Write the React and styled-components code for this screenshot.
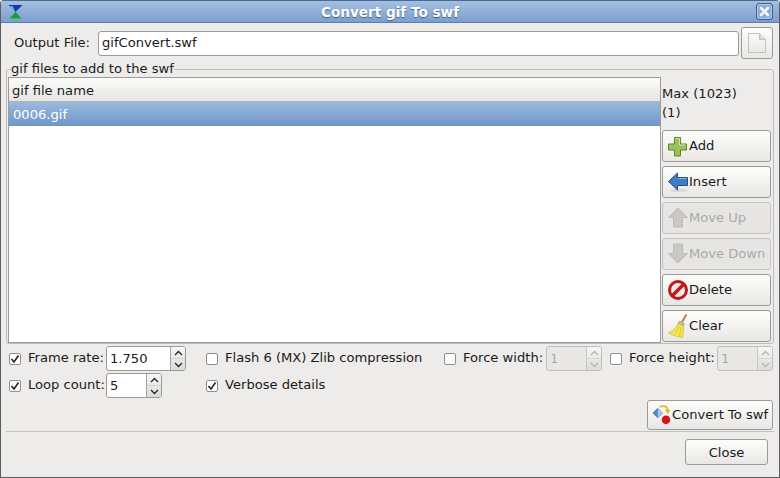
import React from "react";
import styled, { createGlobalStyle } from "styled-components";

const GlobalStyle = createGlobalStyle`
  html, body { margin: 0; padding: 0; background: #edecea; }
  body { font-family: "DejaVu Sans", sans-serif; font-size: 13.1px; color: #1a1a1a; }
`;

const Window = styled("div")`
  width: 780px;
  height: 478px;
  box-sizing: border-box;
  border: 1px solid #5e5e5e;
  border-top: 0;
  border-radius: 4px 4px 0 0;
  background: #edecea;
  display: flex;
  flex-direction: column;
  overflow: hidden;
`;

const TitleBar = styled("div")`
  height: 23px;
  flex: none;
  display: flex;
  align-items: center;
  justify-content: space-between;
  padding: 0 6px 0 8px;
  position: relative;
  background: linear-gradient(#a3bfe0, #7d9fce);
  border-top: 1px solid #4a6a96;
  border-bottom: 1px solid #5d7ea8;
  box-sizing: border-box;
`;

const TitleText = styled("div")`
  position: absolute;
  left: 0;
  right: 0;
  text-align: center;
  font-weight: bold;
  font-size: 13.6px;
  color: #fff;
  text-shadow: 0 1px 1px #3f5f8a;
`;

const CloseBox = styled("div")`
  width: 17px;
  height: 17px;
  box-sizing: border-box;
  border: 1px solid #3e5f8c;
  border-radius: 3px;
  display: flex;
  align-items: center;
  justify-content: center;
  background: #8dabd4;
  box-shadow: inset 0 0 0 1px #b4cbe8;
  z-index: 1;
`;

const Content = styled("div")`
  flex: 1;
  display: flex;
  flex-direction: column;
  padding: 4px 5px 0 5px;
  min-height: 0;
`;

const OutputRow = styled("div")`
  height: 32px;
  display: flex;
  align-items: center;
  padding-left: 8px;
`;

const OutputLabel = styled("span")`
  width: 84px;
  flex: none;
  margin-bottom: 2px;
`;

const TextField = styled("div")`
  width: 641px;
  height: 25px;
  box-sizing: border-box;
  border: 1px solid #9a9a96;
  border-radius: 3px;
  background: #fff;
  padding: 0 3px 2px;
  display: flex;
  align-items: center;
`;

const Button = styled("div")`
  box-sizing: border-box;
  width: ${props => props.$w || "109px"};
  height: ${props => props.$h || "32px"};
  border: 1px solid ${props => (props.disabled ? "#c4c3bf" : "#9a9a96")};
  border-radius: 3px;
  background: ${props =>
    props.disabled ? "#e6e5e3" : "linear-gradient(#fdfdfc, #e8e7e5)"};
  color: ${props => (props.disabled ? "#a9a9a7" : "#1a1a1a")};
  display: flex;
  align-items: center;
  justify-content: ${props => (props.$center ? "center" : "flex-start")};
  flex: none;
  white-space: nowrap;
`;

const ButtonText = styled("span")`
  margin-bottom: 2px;
`;

const FileButton = styled(Button)`
  margin-left: 2px;
  justify-content: center;
`;

const Group = styled("fieldset")`
  margin: 3px 0 0 0;
  padding: 0 1px;
  height: 282px;
  box-sizing: border-box;
  border: 1px solid #bdbcb8;
  border-radius: 3px;
  display: flex;
  min-width: 0;
`;

const Legend = styled("legend")`
  padding: 0;
  margin-left: 3px;
  line-height: 13px;
  height: 15px;
`;

const GroupInner = styled("div")`
  display: flex;
  width: 100%;
  height: 266px;
`;

const FileList = styled("div")`
  width: 653px;
  height: 266px;
  flex: none;
  box-sizing: border-box;
  border: 1px solid #9c9b97;
  background: #fff;
`;

const ListHeader = styled("div")`
  height: 24px;
  box-sizing: border-box;
  padding: 1px 0 0 3px;
  display: flex;
  align-items: center;
  background: linear-gradient(#fbfbfa, #e6e5e3);
  border-bottom: 1px solid #b5b4b0;
`;

const ListRow = styled("div")`
  height: 24px;
  box-sizing: border-box;
  padding-left: 4px;
  display: flex;
  align-items: center;
  color: #fff;
  background: linear-gradient(#9bb9df, #6f95c8);
`;

const SideColumn = styled("div")`
  width: 110px;
  padding-left: 1px;
  box-sizing: border-box;
  display: flex;
  flex-direction: column;
  gap: 4px;
`;

const CountText = styled("div")`
  height: 48px;
  padding-top: 7px;
  box-sizing: border-box;
  line-height: 19px;
  margin-bottom: 1px;
`;

const OptionsBlock = styled("div")`
  margin-top: 1px;
`;

const OptionRow = styled("div")`
  height: 27px;
  display: flex;
  align-items: center;
`;

const Option = styled("label")`
  display: flex;
  align-items: center;
  flex: none;
  width: ${props => props.$w || "auto"};
  white-space: nowrap;
`;

const OptionText = styled("span")`
  margin-bottom: 2px;
`;

const Box = styled("span")`
  width: 12px;
  height: 12px;
  box-sizing: border-box;
  flex: none;
  margin: 0 7px 0 ${props => props.$left || "3px"};
  border: 1px solid #8f8e8a;
  border-radius: 2px;
  background: #fff;
  display: flex;
  align-items: center;
  justify-content: center;
`;

const Spin = styled("div")`
  width: ${props => props.$w};
  height: 25px;
  box-sizing: border-box;
  flex: none;
  border: 1px solid ${props => (props.$off ? "#c0bfbb" : "#9a9a96")};
  border-radius: 3px;
  display: flex;
  background: ${props => (props.$off ? "#e8e7e5" : "#fff")};
  color: ${props => (props.$off ? "#a9a9a7" : "#1a1a1a")};
  margin-left: 2px;
  overflow: hidden;
`;

const SpinValue = styled("div")`
  flex: 1;
  padding-left: 3px;
  display: flex;
  align-items: center;
`;

const SpinArrows = styled("div")`
  width: 14px;
  border-left: 1px solid ${props => (props.$off ? "#c8c7c3" : "#a5a4a0")};
  display: flex;
  flex-direction: column;
  background: linear-gradient(#f7f7f6, #dcdbd8);
`;

const SpinArrow = styled("div")`
  flex: 1;
  display: flex;
  align-items: center;
  justify-content: center;
  & + & { border-top: 1px solid ${props => (props.$off ? "#d5d4d0" : "#b5b4b0")}; }
`;

const ConvertRow = styled("div")`
  display: flex;
  justify-content: flex-end;
  margin-top: 1px;
  height: 30px;
  padding-right: 1px;
`;

const Divider = styled("div")`
  height: 1px;
  background: #c4c3bf;
  margin-top: 1px;
`;

const CloseRow = styled("div")`
  display: flex;
  justify-content: flex-end;
  padding: 7px 6px 0 0;
`;

const IconBox = styled("span")`
  width: 21px;
  height: 22px;
  margin-left: ${props => props.$left || "5px"};
  flex: none;
  display: flex;
  align-items: center;
`;

const Hourglass = () => (
  <svg width="13" height="14" viewBox="0 0 13 14">
    <path d="M0.500 1h12L6.500 7z" fill="#1c2fd0" />
    <path d="M0.500 1h3l3 6z" fill="#38d0d0" />
    <path d="M6.500 7l6 6.500H0.500z" fill="#12a52c" />
    <path d="M0 0.500h13" stroke="#1f3a66" />
  </svg>
);

const CloseX = () => (
  <svg width="11" height="11" viewBox="0 0 11 11">
    <path d="M2 2l7 7M9 2l-7 7" stroke="#f2f5fa" strokeWidth="2.600" strokeLinecap="round" />
  </svg>
);

const PageIcon = () => (
  <svg width="18" height="20" viewBox="0 0 18 20">
    <defs>
      <linearGradient id="pageFill" x1="0" y1="0" x2="0" y2="1">
        <stop offset="0" stopColor="#fbfbfa" />
        <stop offset="1" stopColor="#e9e8e6" />
      </linearGradient>
    </defs>
    <path d="M.5.500h11l6 6v13H.5z" fill="url(#pageFill)" stroke="#c2c1bd" />
    <path d="M11.500.500c.5 3 .5 6 6 6h-6z" fill="#d9d8d5" stroke="#c2c1bd" />
  </svg>
);

const AddIcon = () => (
  <svg width="20" height="22" viewBox="0 0 20 22">
    <path d="M6.500 2.500h6v6.500h6v6h-6v6h-6v-6H.5v-6h6z" fill="#9cc05f" stroke="#5f8a1d" />
    <path d="M7.500 3.500h4v6.500h6" fill="none" stroke="#cfe3a6" />
  </svg>
);

const InsertIcon = () => (
  <svg width="20" height="22" viewBox="0 0 20 22">
    <ellipse cx="11" cy="19.500" rx="9" ry="1.500" fill="#d8d7d4" />
    <path d="M.5 10.500L9.500 2v4.500h10v8h-10V19z" fill="#3f7cc0" stroke="#234f8e" />
    <path d="M10.500 7.500h8" stroke="#87b1de" />
  </svg>
);

const UpIcon = () => (
  <svg width="20" height="22" viewBox="0 0 20 22">
    <path d="M10 1l9.500 9.500H14.500V20h-9v-9.500H.5z" fill="#c9c8c5" stroke="#bcbbb8" />
  </svg>
);

const DownIcon = () => (
  <svg width="20" height="22" viewBox="0 0 20 22">
    <path d="M5.500 1h9v9.500h5L10 20 .5 10.500h5z" fill="#c9c8c5" stroke="#bcbbb8" />
  </svg>
);

const DeleteIcon = () => (
  <svg width="20" height="22" viewBox="0 0 20 22">
    <circle cx="10" cy="11" r="8.500" fill="#efe8e6" stroke="#bd1a1e" strokeWidth="3" />
    <path d="M4 17L16 5" stroke="#c3191d" strokeWidth="3.400" />
  </svg>
);

const BroomIcon = () => (
  <svg width="20" height="24" viewBox="0 0 20 24" style={{ overflow: "visible" }}>
    <path d="M18.500.5L14 8" stroke="#b08a3a" strokeWidth="2" />
    <path d="M11.500 7l5 2.800-1.200 2.400-5.300-3z" fill="#c8c3ae" stroke="#8d8660" strokeWidth=".6" />
    <path d="M10 9.500l5.500 2.800c.2 4-.2 7.500-.8 11.200-4.500-.6-10-2-14.200-4.500 4.500-2 7.500-5 9.500-9.500z" fill="#f4e552" stroke="#cdb92e" strokeWidth=".7" />
    <path d="M11 12c-1 3-2.500 6-4 8M13 13c-.2 3-.8 6-1.600 9" fill="none" stroke="#d3bf33" strokeWidth=".8" />
  </svg>
);

const ConvertIcon = () => (
  <svg width="22" height="22" viewBox="0 0 22 22">
    <path d="M2 9l5-5 5 5-5 5z" fill="#4e86c4" stroke="#2f5f98" strokeWidth=".6" />
    <path d="M7 4l5 5-5 5z" fill="#a6c6e6" />
    <path d="M9 2.500c4-1.500 8-1 8.500 3.500" fill="none" stroke="#e5b824" strokeWidth="2" />
    <path d="M14.500 5.500h6l-3 4.500z" fill="#e5b824" />
    <circle cx="15.700" cy="16" r="4.500" fill="#d8141a" />
  </svg>
);

const Check = () => (
  <svg width="10" height="10" viewBox="0 0 10 10">
    <path d="M1.500 5l2.500 3L8.500 1.500" fill="none" stroke="#222" strokeWidth="1.600" />
  </svg>
);

const Arrow = ({ down, off }) => (
  <svg width="9" height="6" viewBox="0 0 9 6">
    <path
      d={down ? "M1 1l3.500 3.500L8 1" : "M1 5l3.500-3.500L8 5"}
      fill="none"
      stroke={off ? "#b5b4b0" : "#222"}
      strokeWidth="1.300"
    />
  </svg>
);

const SpinBox = ({ value, w, off }) => (
  <Spin $w={w} $off={off}>
    <SpinValue>{value}</SpinValue>
    <SpinArrows $off={off}>
      <SpinArrow $off={off}><Arrow off={off} /></SpinArrow>
      <SpinArrow $off={off}><Arrow down off={off} /></SpinArrow>
    </SpinArrows>
  </Spin>
);

const sideButtons = [
  { text: "Add", icon: <AddIcon /> },
  { text: "Insert", icon: <InsertIcon /> },
  { text: "Move Up", icon: <UpIcon />, disabled: true },
  { text: "Move Down", icon: <DownIcon />, disabled: true },
  { text: "Delete", icon: <DeleteIcon /> },
  { text: "Clear", icon: <BroomIcon /> },
];

const App = () => {
  return (
    <Window>
      <GlobalStyle />
      <TitleBar>
        <Hourglass />
        <TitleText>Convert gif To swf</TitleText>
        <CloseBox><CloseX /></CloseBox>
      </TitleBar>
      <Content>
        <OutputRow>
          <OutputLabel>Output File:</OutputLabel>
          <TextField>gifConvert.swf</TextField>
          <FileButton $w="32px"><PageIcon /></FileButton>
        </OutputRow>
        <Group>
          <Legend>gif files to add to the swf</Legend>
          <GroupInner>
            <FileList>
              <ListHeader>gif file name</ListHeader>
              <ListRow>0006.gif</ListRow>
            </FileList>
            <SideColumn>
              <CountText>Max (1023)<br />(1)</CountText>
              {sideButtons.map(b => (
                <Button key={b.text} disabled={b.disabled}>
                  <IconBox>{b.icon}</IconBox>
                  <ButtonText>{b.text}</ButtonText>
                </Button>
              ))}
            </SideColumn>
          </GroupInner>
        </Group>
        <OptionsBlock>
          <OptionRow>
            <Option $w="98px"><Box><Check /></Box><OptionText>Frame rate:</OptionText></Option>
            <SpinBox value="1.750" w="80px" />
            <Option $w="255px"><Box $left="20px" /><OptionText>Flash 6 (MX) Zlib compression</OptionText></Option>
            <Option $w="103px"><Box /><OptionText>Force width:</OptionText></Option>
            <SpinBox value="1" w="56px" off />
            <Option $w="113px"><Box $left="8px" /><OptionText>Force height:</OptionText></Option>
            <SpinBox value="1" w="56px" off />
          </OptionRow>
          <OptionRow>
            <Option $w="98px"><Box><Check /></Box><OptionText>Loop count:</OptionText></Option>
            <SpinBox value="5" w="56px" />
            <Option><Box $left="44px"><Check /></Box><OptionText>Verbose details</OptionText></Option>
          </OptionRow>
        </OptionsBlock>
        <ConvertRow>
          <Button $w="126px" $h="30px">
            <IconBox $left="3px"><ConvertIcon /></IconBox>
            <ButtonText>Convert To swf</ButtonText>
          </Button>
        </ConvertRow>
        <Divider />
        <CloseRow>
          <Button $w="83px" $h="26px" $center>Close</Button>
        </CloseRow>
      </Content>
    </Window>
  );
};

export default App;
